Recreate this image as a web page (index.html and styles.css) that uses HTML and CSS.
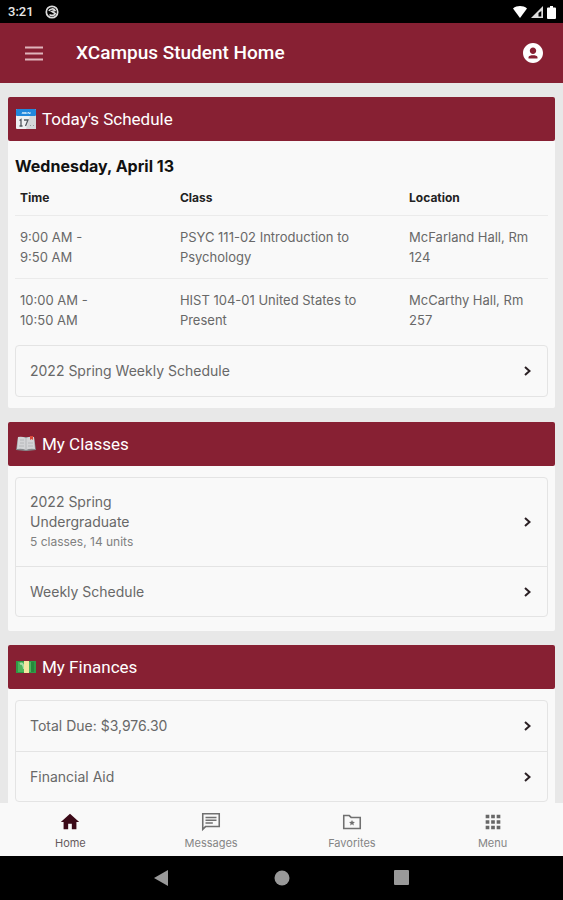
FILE: index.html
```
<!DOCTYPE html>
<html lang="en">
<head>
  <meta charset="UTF-8">
  <title>XCampus Student Home</title>
  <meta name="viewport" content="width=device-width, initial-scale=1.0">
  <link rel="stylesheet" href="styles.css">
</head>
<body>
  <div class="status-bar">
    <span class="clock">3:21</span>
    <svg class="status-app" viewBox="0 0 14 14" width="14" height="14">
      <circle cx="7" cy="7" r="5.700" fill="none" stroke="#ddd" stroke-width="1.700"/>
      <path d="M4 6C5 3.500 9 3.300 10 5.500L7 6.500 10.300 8.500C9.500 10.700 6 11 4.500 9.500" fill="none" stroke="#ddd" stroke-width="1.700"/>
    </svg>
    <div class="status-icons">
      <svg viewBox="0 0 14 12" width="14" height="12"><path d="M0 2.500C4 -.7 10 -.7 14 2.500L7 12z" fill="#fff"/></svg>
      <svg viewBox="0 0 12 12" width="12" height="12"><path d="M12 0v12H0z" fill="#ddd"/><path d="M10.300 5v5.500H7.500V7z" fill="#000"/></svg>
      <svg viewBox="0 0 9 13" width="9" height="13"><path d="M3 0h3v1.500h2q1 0 1 1V12q0 1-1 1H1q-1 0-1-1V2.500q0-1 1-1h2z" fill="#fff"/></svg>
    </div>
  </div>

  <header class="app-bar">
    <button class="icon-button" aria-label="Open menu">
      <svg viewBox="0 0 18 15" width="18" height="15"><path d="M0 1.500h18M0 7.500h18M0 13.500h18" stroke="#dfb4bb" stroke-width="2"/></svg>
    </button>
    <h1>XCampus Student Home</h1>
    <button class="icon-button" aria-label="Account">
      <svg viewBox="2 2 20 20" width="20" height="20"><path fill="#fff" d="M12 2C6.480 2 2 6.480 2 12s4.480 10 10 10 10-4.480 10-10S17.520 2 12 2zm0 4.500c1.800 0 3.200 1.400 3.200 3.200s-1.400 3.200-3.200 3.200-3.200-1.400-3.200-3.200S10.200 6.500 12 6.500zM7.500 17.500v-1.200c0-1.500 2.500-2 4.500-2s4.500.5 4.500 2v1.200z"/></svg>
    </button>
  </header>

  <main class="content">
    <section class="card">
      <h2>
        <svg viewBox="0 0 20 20" width="20" height="20">
          <rect width="20" height="20" rx="1" fill="#eef0f2"/>
          <path d="M14 7h6v13H10z" fill="#d5d7da"/>
          <rect width="20" height="7" rx="1" fill="#2188dc"/>
          <path d="M6 5l1-2 1 2 1-2 1 2V3M12 5V3l2 2V3" fill="none" stroke="#c5e4fa"/>
          <path d="M3.500 11.500L5 10.500V17M3.500 17h3M8 11h4l-2.500 6" fill="none" stroke="#53595f" stroke-width="1.300"/>
          <path d="M14 16.500h1M17 16.500h1" stroke="#9a9da0"/>
        </svg>
        Today's Schedule
      </h2>
      <div class="card-body schedule">
        <h3>Wednesday, April 13</h3>
        <table>
          <thead>
            <tr>
              <th class="col-time">Time</th>
              <th class="col-class">Class</th>
              <th class="col-location">Location</th>
            </tr>
          </thead>
          <tbody>
            <tr>
              <td>9:00 AM -<br>9:50 AM</td>
              <td>PSYC 111-02 Introduction to Psychology</td>
              <td>McFarland Hall, Rm 124</td>
            </tr>
            <tr>
              <td>10:00 AM -<br>10:50 AM</td>
              <td>HIST 104-01 United States to Present</td>
              <td>McCarthy Hall, Rm 257</td>
            </tr>
          </tbody>
        </table>
        <div class="link-list">
          <a href="#">
            <span>2022 Spring Weekly Schedule</span>
            <svg class="chevron" viewBox="0 0 7 10" width="7" height="10"><path d="M1 1l4.500 4L1 9"/></svg>
          </a>
        </div>
      </div>
    </section>

    <section class="card">
      <h2>
        <svg viewBox="0 0 20 20" width="20" height="20">
          <path d="M2 3h16l2 13-9 1H9l-9-1z" fill="#86888b"/>
          <path d="M2 3q4-1 8 1 4-2 8-1l1 12q-5-1-9 1-4-2-9-1z" fill="#d3d4d6"/>
          <path d="M10 4v12M4 6h4M4 9h4M3 12h5M12 9h5M12 12h5" stroke="#b6b8ba"/>
          <path d="M14 2h3v4l-1.500-1L14 6z" fill="#d94a3b"/>
        </svg>
        My Classes
      </h2>
      <div class="card-body">
        <div class="link-list">
          <a href="#">
            <span>2022 Spring<br>Undergraduate<small>5 classes, 14 units</small></span>
            <svg class="chevron" viewBox="0 0 7 10" width="7" height="10"><path d="M1 1l4.500 4L1 9"/></svg>
          </a>
          <a href="#">
            <span>Weekly Schedule</span>
            <svg class="chevron" viewBox="0 0 7 10" width="7" height="10"><path d="M1 1l4.500 4L1 9"/></svg>
          </a>
        </div>
      </div>
    </section>

    <section class="card">
      <h2>
        <svg viewBox="0 0 20 20" width="20" height="20">
          <rect y="4" width="20" height="12" fill="#2f9a46"/>
          <rect x="2" y="5" width="16" height="10" fill="#4cb45c"/>
          <rect x="15" y="5" width="3" height="10" fill="#27863c"/>
          <path d="M4 7q2-1 3 1t1 4" fill="none" stroke="#a5dda3" stroke-width="2"/>
          <rect x="8" y="4" width="5" height="12" fill="#f3e6a0"/>
        </svg>
        My Finances
      </h2>
      <div class="card-body">
        <div class="link-list">
          <a href="#">
            <span>Total Due: $3,976.30</span>
            <svg class="chevron" viewBox="0 0 7 10" width="7" height="10"><path d="M1 1l4.500 4L1 9"/></svg>
          </a>
          <a href="#">
            <span>Financial Aid</span>
            <svg class="chevron" viewBox="0 0 7 10" width="7" height="10"><path d="M1 1l4.500 4L1 9"/></svg>
          </a>
        </div>
      </div>
    </section>
  </main>

  <nav class="tab-bar">
    <a class="active" href="#">
      <svg viewBox="0 0 24 24" width="22" height="22"><path d="M10 20v-6h4v6h5v-8h3L12 3 2 12h3v8z" fill="#3c0a18"/></svg>
      Home
    </a>
    <a href="#">
      <svg viewBox="0 0 24 24" width="22" height="22"><path d="M3 3h18v14H6l-3 3zM6 7h12M6 10h12M6 13h8" fill="none" stroke="#707070" stroke-width="1.700"/></svg>
      Messages
    </a>
    <a href="#">
      <svg viewBox="0 0 24 24" width="22" height="22"><path d="M3 5h6l2 2h10v12H3z" fill="none" stroke="#707070" stroke-width="1.700"/><path d="M12 9.800l.9 2 2.300.2-1.700 1.500.5 2.200-2-1.200-2 1.200.5-2.200-1.700-1.500 2.300-.2z" fill="#707070"/></svg>
      Favorites
    </a>
    <a href="#">
      <svg viewBox="0 0 24 24" width="22" height="22"><path d="M4 4h4v4H4zm6 0h4v4h-4zm6 0h4v4h-4zM4 10h4v4H4zm6 0h4v4h-4zm6 0h4v4h-4zM4 16h4v4H4zm6 0h4v4h-4zm6 0h4v4h-4z" fill="#686868"/></svg>
      Menu
    </a>
  </nav>

  <div class="system-bar">
    <button aria-label="Back"><svg viewBox="0 0 16 16" width="16" height="16"><path d="M14 0v16L0 8z"/></svg></button>
    <button aria-label="Home screen"><svg viewBox="0 0 16 16" width="16" height="16"><circle cx="8" cy="8" r="7.500"/></svg></button>
    <button aria-label="Recent apps"><svg viewBox="0 0 16 16" width="16" height="16"><rect width="15" height="15" rx="1"/></svg></button>
  </div>
</body>
</html>
```
FILE: styles.css
```
:root {
  --maroon: #872033;
  --surface: #f9f9f9;
  --line: #e4e4e4;
  --text: #686868;
}

* {
  box-sizing: border-box;
}

body {
  display: flex;
  flex-direction: column;
  height: 100vh;
  margin: 0;
  background: #e8e8e8;
  color: var(--text);
  font-family: Inter, "Liberation Sans", sans-serif;
  font-size: 14px;
  line-height: 20px;
}

h1, h2, h3 {
  margin: 0;
}

a {
  color: inherit;
  text-decoration: none;
}

button {
  display: flex;
  padding: 0;
  border: none;
  background: none;
  cursor: pointer;
}

svg {
  display: block;
  flex: none;
}

/* Status bar */
.status-bar {
  display: flex;
  align-items: center;
  flex: none;
  gap: 11px;
  height: 23px;
  padding: 1px 7px 0 8px;
  background: #000;
}
.clock {
  color: #e8e8e8;
  font-family: Roboto, sans-serif;
  font-size: 13px;
  font-weight: 500;
}
.status-icons {
  display: flex;
  align-items: center;
  gap: 4px;
  margin-left: auto;
}

/* Header */
.app-bar {
  display: flex;
  align-items: center;
  flex: none;
  height: 60px;
  padding: 0 20px 0 25px;
  background: var(--maroon);
}
.app-bar h1 {
  flex: 1;
  margin-left: 33px;
  color: #fff;
  font-family: Roboto, sans-serif;
  font-size: 19px;
  font-weight: 500;
  line-height: 24px;
}

/* Cards */
.content {
  flex: 1;
  min-height: 0;
  padding: 14px 8px;
  overflow-y: auto;
  scrollbar-width: none;
}
.card {
  margin-bottom: 14px;
  border-radius: 2px;
  background: var(--surface);
}
.card h2 {
  display: flex;
  align-items: center;
  gap: 6px;
  height: 44px;
  padding: 0 8px;
  border-radius: 2px;
  background: var(--maroon);
  color: #fff;
  font-family: Roboto, sans-serif;
  font-size: 17px;
  font-weight: 400;
}
.card-body {
  padding: 11px 7px 14px;
}
.card-body.schedule {
  padding: 15px 7px 11px;
}
.card h3 {
  color: #111;
  font-size: 16px;
  font-weight: 700;
}

table {
  width: 100%;
  margin-bottom: 4px;
  border-collapse: collapse;
  table-layout: fixed;
  font-size: 13px;
}
th, td {
  padding: 11px 10px 11px 5px;
  text-align: left;
  vertical-align: top;
}
th {
  padding-top: 12px;
  padding-bottom: 7px;
  color: #222;
  font-size: 12px;
  font-weight: 700;
}
tr {
  border-bottom: 1px solid #ebebeb;
}
tbody tr:last-child {
  border-bottom: none;
}
.col-time {
  width: 30%;
}
.col-class {
  width: 43%;
}
.col-location {
  width: 27%;
}

.link-list {
  border: 1px solid var(--line);
  border-radius: 4px;
}
.link-list a {
  display: flex;
  align-items: center;
  justify-content: space-between;
  min-height: 50px;
  padding: 14px 16px 14px 14px;
}
.link-list a + a {
  border-top: 1px solid var(--line);
}
.link-list small {
  display: block;
  color: #808080;
  font-size: 12px;
}
.chevron path {
  fill: none;
  stroke: #2b2024;
  stroke-width: 2;
}

/* Bottom tabs */
.tab-bar {
  display: flex;
  flex: none;
  height: 53px;
  background: var(--surface);
}
.tab-bar a {
  display: flex;
  flex: 1;
  flex-direction: column;
  align-items: center;
  justify-content: space-between;
  padding: 8px 0 6px;
  color: #858585;
  font-size: 11px;
  line-height: 14px;
}
.tab-bar .active {
  color: #665a5d;
}

/* Android navigation */
.system-bar {
  display: flex;
  align-items: center;
  justify-content: center;
  flex: none;
  gap: 104px;
  height: 44px;
  background: #000;
}
.system-bar svg {
  fill: #999;
}
```
